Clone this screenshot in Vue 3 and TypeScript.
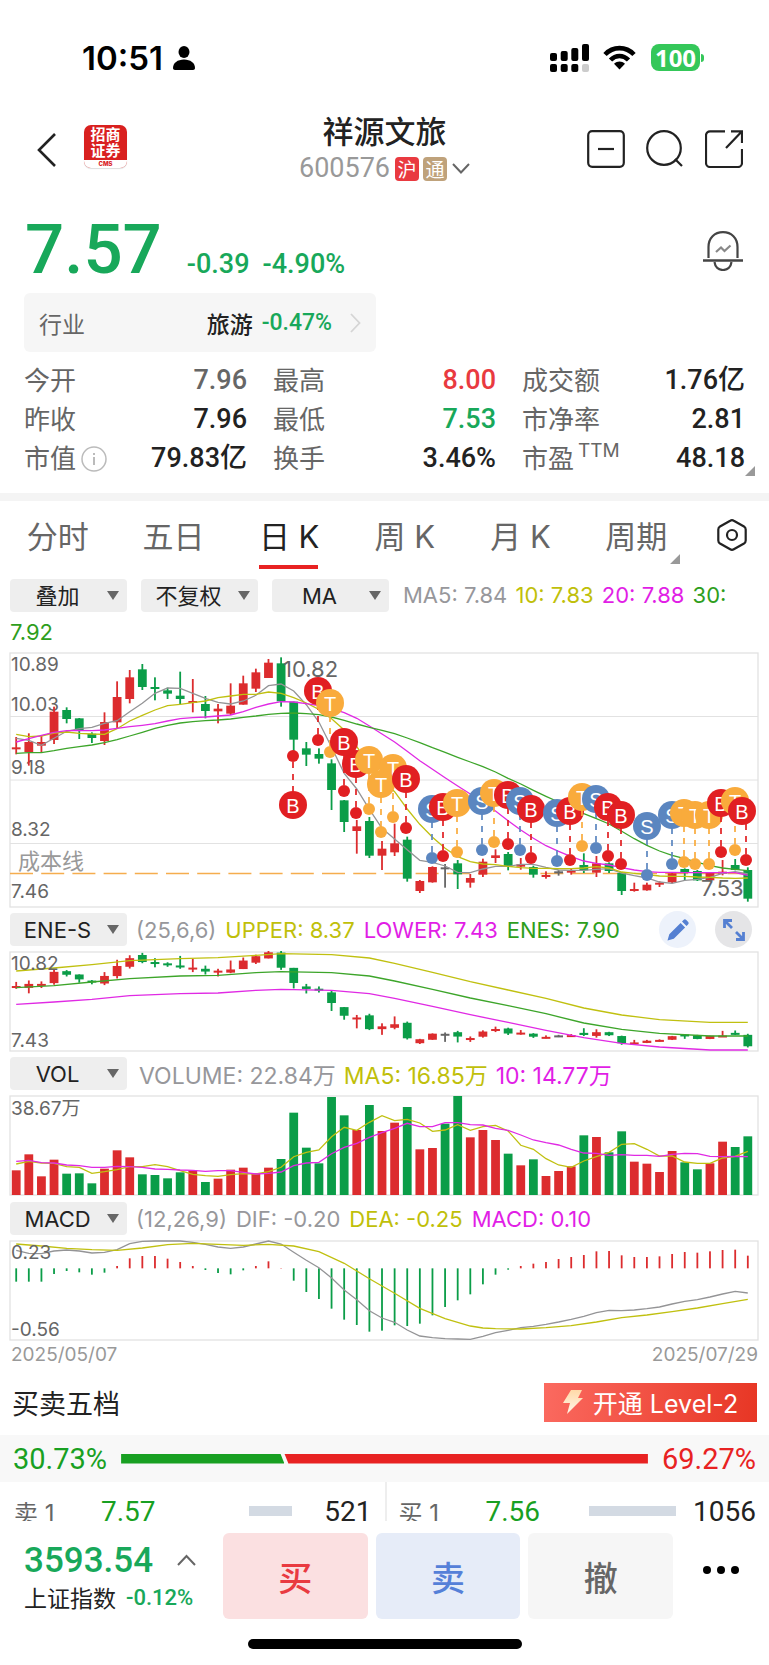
<script setup lang="ts">
import { ref } from 'vue'

type Candle = [kind: 'r' | 'g' | 'k', bodyTop: number, bodyBottom: number, high: number, low: number]
type Marker = [kind: 'B' | 'S' | 'T', x: number, y: number, dotX: number, dotY: number]

const FIRST_X = 16.2
const STEP = 12.614
const palette = { r: '#dc2c2e', g: '#0b9d48', k: '#666666' }
const markerColor = { B: '#e11f22', S: '#5b86c0', T: '#f9ab3c' }
const px = (i: number) => FIRST_X + i * STEP

// Vertical values are stored in thirds of a unit.
const candles: Candle[] = [
  ['r', 322, 327, 291, 343], ['r', 306, 336, 280, 377], ['r', 306, 317, 287, 337], ['r', 215, 300, 200, 312],
  ['g', 210, 237, 202, 250], ['g', 235, 272, 234, 297], ['g', 281, 294, 277, 309], ['r', 246, 303, 217, 315],
  ['r', 171, 247, 124, 265], ['r', 112, 177, 90, 190], ['g', 88, 141, 72, 150], ['g', 141, 147, 112, 181],
  ['g', 151, 161, 143, 177], ['g', 167, 177, 95, 192], ['r', 183, 189, 117, 217], ['g', 192, 213, 168, 235],
  ['r', 206, 214, 192, 250], ['r', 197, 221, 130, 225], ['r', 130, 194, 107, 194], ['r', 97, 146, 86, 156],
  ['r', 68, 114, 57, 114], ['g', 70, 184, 52, 200], ['g', 185, 299, 185, 340], ['g', 325, 344, 306, 378],
  ['g', 342, 356, 325, 371], ['g', 370, 450, 358, 510], ['g', 481, 546, 480, 576], ['r', 559, 573, 540, 641],
  ['g', 543, 647, 531, 654], ['r', 626, 647, 603, 690], ['r', 610, 637, 551, 648], ['g', 599, 716, 590, 725],
  ['r', 723, 753, 720, 759], ['r', 681, 727, 679, 728], ['k', 682, 687, 672, 743], ['g', 670, 703, 660, 747],
  ['r', 714, 728, 702, 743], ['r', 665, 704, 656, 711], ['r', 646, 654, 628, 669], ['g', 642, 680, 636, 691],
  ['r', 673, 680, 654, 689], ['g', 681, 704, 677, 713], ['r', 705, 710, 694, 716], ['k', 694, 699, 690, 707],
  ['r', 692, 697, 684, 704], ['g', 675, 691, 640, 699], ['r', 670, 698, 648, 711], ['g', 670, 693, 667, 699],
  ['g', 699, 753, 696, 765], ['r', 747, 753, 728, 755], ['r', 734, 751, 728, 752], ['r', 728, 734, 724, 741],
  ['r', 700, 727, 698, 729], ['g', 687, 697, 685, 720], ['g', 693, 721, 690, 723], ['r', 697, 721, 697, 722],
  ['r', 695, 700, 660, 706], ['g', 675, 690, 657, 691], ['g', 690, 776, 682, 785],
]

const toBars = (map: (v: number) => number) =>
  candles.map(([kind, t, b, h, l], i) => ({
    x: px(i), color: palette[kind], top: map(t), height: Math.max(map(b) - map(t), 2), high: map(h), low: map(l),
  }))
const priceBars = toBars((v) => 640 + v / 3)
const eneBars = toBars((v) => 910 + (127 + (v - 68) * 0.398) / 3)

const line = (base: number, values: number[]) =>
  values.map((v, i) => `${px(i).toFixed(1)},${(base + v / 3).toFixed(1)}`).join(' ')
const sparse = (base: number, points: [number, number][]) =>
  points.map(([i, v]) => `${px(i).toFixed(1)},${(base + v / 3).toFixed(1)}`).join(' ')

const priceLines = [
  { color: '#949496', points: line(640, [295, 301, 316, 295, 274, 266, 262, 250, 242, 215, 190, 160, 144, 145, 160, 175, 187, 192, 183, 166, 137, 132, 153, 194, 246, 322, 400, 447, 508, 565, 597, 629, 661, 667, 678, 697, 698, 687, 679, 679, 673, 673, 682, 690, 691, 691, 688, 686, 699, 707, 714, 726, 730, 721, 718, 712, 700, 695, 702]) },
  { color: '#c0c010', points: line(640, [283, 290, 288, 279, 276, 280, 282, 283, 266, 243, 226, 210, 197, 193, 188, 183, 173, 168, 163, 163, 156, 160, 173, 189, 208, 236, 270, 320, 375, 418, 455, 507, 553, 592, 625, 650, 665, 672, 674, 679, 683, 685, 685, 686, 686, 684, 680, 684, 696, 700, 704, 708, 709, 709, 711, 712, 714, 715, 714]) },
  { color: '#e02ae4', points: line(640, [306, 296, 286, 277, 272, 271, 272, 270, 265, 260, 256, 251, 243, 236, 233, 231, 228, 225, 215, 202, 192, 185, 186, 191, 197, 206, 218, 235, 258, 282, 306, 334, 362, 388, 413, 438, 462, 488, 513, 542, 570, 595, 617, 634, 650, 663, 670, 675, 683, 690, 695, 697, 697, 698, 698, 698, 698, 698, 706]) },
  { color: '#3da52a', points: line(640, [340, 338, 338, 332, 325, 320, 315, 308, 299, 288, 277, 265, 256, 249, 245, 242, 240, 237, 232, 228, 223, 220, 219, 221, 224, 231, 241, 252, 262, 271, 281, 294, 308, 323, 337, 352, 366, 380, 396, 415, 432, 451, 469, 486, 503, 521, 536, 552, 574, 596, 616, 633, 646, 656, 667, 677, 684, 688, 692]) },
]

const eneLines = [
  { color: '#c0c010', points: sparse(910, [[0, 183], [3, 174], [6, 164], [9, 152], [13, 146], [16, 143], [19, 136], [21, 131], [25, 134], [28, 144], [30, 160], [33, 187], [36, 215], [39, 240], [42, 265], [45, 294], [48, 315], [51, 329], [55, 337], [58, 337]]) },
  { color: '#3da52a', points: sparse(910, [[0, 233], [3, 227], [6, 216], [9, 206], [13, 198], [16, 196], [19, 188], [21, 185], [25, 188], [28, 198], [30, 213], [33, 238], [36, 264], [39, 287], [42, 311], [45, 339], [48, 358], [51, 370], [55, 378], [58, 378]]) },
  { color: '#e02ae4', points: sparse(910, [[0, 283], [3, 276], [6, 268], [9, 257], [13, 251], [16, 249], [19, 241], [21, 238], [25, 241], [28, 251], [30, 265], [33, 289], [36, 314], [39, 337], [42, 361], [45, 383], [48, 400], [51, 411], [55, 420], [58, 420]]) },
]

const volumeTops = [781, 733, 799, 749, 791, 790, 820, 776, 721, 742, 793, 795, 805, 787, 781, 816, 806, 779, 773, 790, 773, 747, 608, 713, 760, 561, 616, 660, 585, 663, 638, 591, 718, 714, 641, 558, 682, 660, 690, 731, 766, 748, 798, 783, 769, 676, 681, 727, 664, 755, 761, 786, 723, 757, 778, 760, 695, 711, 679]
const greenVolume = new Set([4, 5, 6, 10, 11, 12, 13, 15, 21, 22, 23, 24, 25, 26, 28, 31, 34, 35, 39, 41, 45, 47, 48, 53, 54, 57, 58])
const volumeBars = volumeTops.map((v, i) => ({
  x: px(i), y: 910 + v / 3, color: greenVolume.has(i) ? palette.g : palette.r,
}))
const volumeLines = [
  { color: '#c0c010', points: line(910, [762, 754, 759, 760, 770, 772, 790, 785, 779, 770, 770, 764, 770, 782, 793, 797, 799, 794, 791, 792, 785, 772, 740, 727, 720, 680, 652, 661, 637, 617, 632, 628, 639, 664, 660, 644, 661, 650, 646, 663, 706, 718, 746, 765, 772, 753, 740, 727, 703, 701, 718, 738, 738, 756, 760, 760, 744, 739, 724]) },
  { color: '#e02ae4', points: line(910, [754, 751, 758, 759, 765, 767, 772, 772, 769, 770, 772, 777, 778, 780, 781, 784, 782, 782, 787, 792, 790, 786, 767, 759, 757, 731, 712, 700, 682, 668, 655, 640, 650, 650, 638, 638, 644, 645, 655, 661, 675, 690, 698, 705, 718, 729, 730, 736, 734, 736, 736, 739, 733, 730, 731, 739, 740, 739, 740]) },
]

const macdEnds = [245, 245, 245, 222, 213, 217, 224, 218, 198, 175, 168, 168, 176, 186, 198, 210, 219, 223, 211, 198, 184, 204, 242, 276, 297, 326, 359, 375, 395, 392, 376, 378, 371, 346, 321, 301, 283, 253, 224, 209, 198, 191, 186, 177, 171, 165, 154, 153, 166, 171, 171, 169, 162, 156, 158, 154, 150, 149, 167]
const macdBars = macdEnds.map((v, i) => ({
  x: px(i), y: 1200 + Math.min(v, 205) / 3, h: Math.abs(v - 205) / 3, color: v > 205 ? palette.g : palette.r,
}))
const macdLines = [
  { color: '#949496', points: line(1200, [151, 160, 161, 153, 150, 153, 159, 157, 149, 131, 124, 123, 123, 123, 127, 133, 141, 145, 141, 132, 123, 132, 157, 181, 203, 234, 270, 299, 332, 354, 367, 390, 408, 413, 416, 417, 418, 409, 398, 391, 383, 379, 373, 366, 358, 349, 338, 331, 332, 330, 326, 321, 312, 304, 299, 291, 282, 274, 279]) },
  { color: '#c0c010', points: sparse(1200, [[0, 132], [2, 138], [4, 145], [6, 149], [8, 151], [10, 144], [12, 134], [14, 130], [16, 133], [18, 136], [20, 133], [22, 138], [24, 155], [26, 190], [28, 236], [30, 280], [32, 325], [34, 356], [36, 378], [37, 384], [38, 386], [40, 387], [42, 383], [44, 377], [46, 366], [48, 353], [50, 345], [52, 335], [54, 324], [56, 311], [58, 298]]) },
]

const markers: Marker[] = [
  ['B', 293, 805, 293, 756], ['B', 318, 691, 318, 740], ['T', 330, 703, 330, 752],
  ['B', 356, 764, 356, 813], ['B', 344, 742, 344, 791], ['T', 369, 760, 369, 809], ['T', 393, 768, 393, 817],
  ['T', 381, 784, 381, 832], ['B', 406, 779, 406, 828], ['S', 432, 809, 432, 858], ['B', 443, 807, 443, 856],
  ['T', 457, 803, 457, 852], ['S', 482, 801, 482, 850], ['T', 494, 793, 494, 842], ['B', 508, 795, 508, 844],
  ['S', 520, 801, 520, 850], ['B', 531, 809, 531, 858], ['S', 557, 813, 557, 861], ['B', 570, 811, 570, 860],
  ['T', 582, 797, 582, 846], ['S', 596, 799, 596, 848], ['B', 608, 807, 608, 856], ['B', 621, 815, 621, 864],
  ['S', 647, 826, 647, 875], ['S', 672, 815, 672, 864], ['T', 684, 813, 684, 862], ['T', 695, 815, 695, 864],
  ['T', 709, 815, 709, 864], ['B', 721, 803, 721, 852], ['T', 735, 801, 735, 850], ['B', 742, 811, 746, 860],
]

const stats = [
  ['今开', '7.96', 'muted'], ['最高', '8.00', 'up'], ['成交额', '1.76亿', ''],
  ['昨收', '7.96', ''], ['最低', '7.53', 'down'], ['市净率', '2.81', ''],
  ['市值', '79.83亿', ''], ['换手', '3.46%', ''], ['市盈', '48.18', ''],
]
const tabs = ['分时', '五日', '日 K', '周 K', '月 K', '周期']
const activeTab = ref('日 K')
</script>

<template>
  <main class="page">
    <div class="status">
      <span class="clock">10:51</span>
      <svg class="person" width="22" height="24" viewBox="0 0 22 24"><ellipse cx="11" cy="6" rx="5.5" ry="6" /><path d="M0 22c0-5 4.500-8.500 11-8.500S22 17 22 22c0 1.300-.8 2-2 2H2c-1.200 0-2-.7-2-2z" /></svg>
      <svg class="signal" width="39" height="28" viewBox="0 0 39 28">
        <rect x="0" y="9" width="7" height="8" rx="2" /><rect x="10.700" y="7" width="7" height="10" rx="2" /><rect x="21.300" y="4" width="7" height="13" rx="2" /><rect x="32" y="0" width="7" height="17" rx="2" />
        <rect x="0" y="20" width="7" height="8" rx="2" /><rect x="10.700" y="20" width="7" height="8" rx="2" /><rect x="21.300" y="20" width="7" height="8" rx="2" /><rect x="32" y="20" width="7" height="8" rx="2" fill="#ccc" />
      </svg>
      <svg class="wifi" width="33" height="25" viewBox="0 0 33 25"><path d="M2 9.500C10 1 23 1 31 9.500M7.500 15c5.300-5.400 12.700-5.400 18 0" fill="none" stroke="#000" stroke-width="4.600" /><path d="M11 18.800c3.400-3 7.600-3 11 0L16.500 24.500z" /></svg>
      <span class="battery">100</span><i class="nub"></i>
    </div>

    <header class="header">
      <div class="left">
        <button class="plain" aria-label="返回"><svg width="20" height="36" viewBox="0 0 20 36"><path d="M18 2L2 18l16 16" fill="none" stroke="#222" stroke-width="2.600" /></svg></button>
        <div class="logo"><b>招商<br />证券</b><em>CMS</em></div>
      </div>
      <div class="title">
        <h1>祥源文旅</h1>
        <button class="plain code"><span>600576</span><i class="tag hu">沪</i><i class="tag tong">通</i><svg width="18" height="11" viewBox="0 0 18 11"><path d="M1 1l8 8.500L17 1" fill="none" stroke="#666" stroke-width="2" /></svg></button>
      </div>
      <div class="right">
        <button class="plain" aria-label="移除自选"><svg width="38" height="38" viewBox="0 0 38 38"><rect x="1.200" y="1.200" width="35.600" height="35.600" rx="4" /><path d="M11 19h16" /></svg></button>
        <button class="plain" aria-label="搜索"><svg width="38" height="38" viewBox="0 0 38 38"><circle cx="18" cy="18" r="16.800" /><path d="M29 29l7 7" /></svg></button>
        <button class="plain" aria-label="分享"><svg width="38" height="38" viewBox="0 0 38 38"><path d="M20 1.300H5a4 4 0 0 0-4 4V33a4 4 0 0 0 4 4h28a4 4 0 0 0 4-4V19M26 1.300h11V13M37 1.300L21 18" /></svg></button>
      </div>
    </header>

    <section class="quote">
      <strong>7.57</strong><span>-0.39</span><span>-4.90%</span>
      <button class="plain bell" aria-label="预警"><svg width="40" height="40" viewBox="0 0 40 40" fill="none" stroke="#444" stroke-width="2.200"><path d="M5.500 27V16C5.500 7 11.500 1.200 20 1.200S34.500 7 34.500 16v11" /><path d="M0 29.500h40" stroke-width="2.600" /><path d="M11.500 31c.6 5 4 8 8.500 8s7.900-3 8.500-8" /><path d="M13 21l5-4.500 3.500 3.500 6-5.500" stroke="#888" /></svg></button>
    </section>

    <a href="#industry" class="industry">
      <span>行业</span><b>旅游</b><em>-0.47%</em>
      <svg width="11" height="20" viewBox="0 0 11 20"><path d="M1 1l8.500 9L1 19" fill="none" stroke="#d5d5d5" stroke-width="1.800" /></svg>
    </a>

    <dl class="stats">
      <div v-for="([label, value, tone], i) in stats" :key="label">
        <dt>{{ label }}<sup v-if="i === 8">TTM</sup><svg v-if="i === 6" class="info" width="26" height="26" viewBox="0 0 26 26"><circle cx="13" cy="13" r="12" fill="none" stroke="#bbb" stroke-width="1.500" /><path d="M13 11v8M13 7v2" stroke="#bbb" stroke-width="2" /></svg></dt>
        <dd :class="tone">{{ value }}<i v-if="i === 8" class="corner"></i></dd>
      </div>
    </dl>

    <nav class="tabs">
      <button v-for="t in tabs" :key="t" class="plain" :class="{ active: t === activeTab }" @click="activeTab = t">{{ t }}<i v-if="t === '周期'" class="corner"></i></button>
      <button class="plain gear" aria-label="设置"><svg width="30" height="32" viewBox="0 0 30 32" fill="none" stroke="#222" stroke-width="2.200"><path d="M13.200 1.700a3.500 3.500 0 0 1 3.600 0L27 7.500a3.500 3.500 0 0 1 1.700 3v11a3.500 3.500 0 0 1-1.700 3L16.800 30.300a3.500 3.500 0 0 1-3.600 0L3 24.500a3.500 3.500 0 0 1-1.700-3v-11a3.500 3.500 0 0 1 1.700-3z" /><circle cx="15" cy="16" r="5" /></svg></button>
    </nav>

    <div class="tools">
      <span class="drop"><select aria-label="叠加"><option>叠加</option></select></span>
      <span class="drop"><select aria-label="复权"><option>不复权</option></select></span>
      <span class="drop"><select aria-label="主图指标"><option>MA</option></select></span>
      <span class="leg c5">MA5: 7.84</span> <span class="leg c10">10: 7.83</span> <span class="leg c20">20: 7.88</span> <span class="c30">30:</span> <span class="c30">7.92</span>
    </div>

    <svg class="chart" viewBox="9 652 750 256">
      <path d="M10 716.500H758M10 780H758M10 843.500H758" stroke="#e2e2e2" />
      <rect x="10" y="653" width="748" height="254" fill="none" stroke="#e2e2e2" stroke-width="1.300" />
      <g class="axis"><text x="11" y="671">10.89</text><text x="11" y="711">10.03</text><text x="11" y="774">9.18</text><text x="11" y="836">8.32</text><text x="11" y="898">7.46</text></g>
      <text x="18" y="869" class="cost">成本线</text>
      <path d="M10 873.500H758" stroke="#f5ad4e" stroke-width="1.500" stroke-dasharray="23 8.200" />
      <g v-for="(c, i) in priceBars" :key="i" :fill="c.color"><rect :x="c.x - 4.4" :y="c.top" width="8.800" :height="c.height" /><rect :x="c.x - 0.9" :y="c.high" width="1.800" :height="c.low - c.high" /></g>
      <polyline v-for="l in priceLines" :key="l.color" :points="l.points" :stroke="l.color" class="ma" />
      <g class="peak"><text x="283" y="677">10.82</text><text x="701" y="896">7.53</text></g>
      <g v-for="([k, x, y, dx, dy], i) in markers" :key="i">
        <path :d="`M${dx} ${y}V${dy}`" :stroke="markerColor[k]" stroke-width="1.700" stroke-dasharray="6 6" stroke-dashoffset="-1" />
        <circle :cx="dx" :cy="dy" r="6" :fill="markerColor[k]" />
        <circle :cx="x" :cy="y" r="14" :fill="markerColor[k]" />
        <text :x="x" :y="y + 8" class="letter">{{ k }}</text>
      </g>
    </svg>

    <div class="row">
      <span class="drop"><select aria-label="副图指标一"><option>ENE-S</option></select></span>
      <span class="c5">(25,6,6)</span><span class="c10">UPPER: 8.37</span><span class="c20">LOWER: 7.43</span><span class="c30">ENES: 7.90</span>
      <button class="plain round pen" aria-label="编辑"><svg width="22" height="22" viewBox="0 0 22 22" fill="#5580d2"><path d="M.5 21.500l1.800-6.300L13.600 3.900l4.500 4.500L6.800 19.700zM15 2.500l1.500-1.500a2 2 0 0 1 2.800 0l1.700 1.700a2 2 0 0 1 0 2.800L19.500 7z" /></svg></button>
      <button class="plain round grow" aria-label="全屏"><svg width="22" height="22" viewBox="0 0 22 22" fill="none" stroke="#5580d2" stroke-width="2.800"><path d="M1.500 9V1.500H9M2 2l7 7M20.500 13v7.500H13M20 20l-7-7" /></svg></button>
    </div>
    <svg class="chart" viewBox="9 951 750 101">
      <rect x="10" y="952" width="748" height="99" fill="none" stroke="#e2e2e2" stroke-width="1.300" />
      <g v-for="(c, i) in eneBars" :key="i" :fill="c.color"><rect :x="c.x - 4.4" :y="c.top" width="8.800" :height="c.height" /><rect :x="c.x - 0.9" :y="c.high" width="1.800" :height="c.low - c.high" /></g>
      <polyline v-for="l in eneLines" :key="l.color" :points="l.points" :stroke="l.color" class="ma" />
      <g class="axis"><text x="11" y="970">10.82</text><text x="11" y="1047">7.43</text></g>
    </svg>

    <div class="row volume">
      <span class="drop"><select aria-label="副图指标二"><option>VOL</option></select></span>
      <span class="c5 vol">VOLUME: 22.84万</span><span class="c10">MA5: 16.85万</span><span class="c20">10: 14.77万</span>
    </div>
    <svg class="chart" viewBox="9 1095 750 102">
      <rect x="10" y="1096" width="748" height="99" fill="none" stroke="#e2e2e2" stroke-width="1.300" />
      <rect v-for="(b, i) in volumeBars" :key="i" :x="b.x - 4.4" :y="b.y" width="8.800" :height="1195 - b.y" :fill="b.color" />
      <polyline v-for="l in volumeLines" :key="l.color" :points="l.points" :stroke="l.color" class="ma" />
      <g class="axis"><text x="11" y="1115">38.67万</text></g>
    </svg>

    <div class="row">
      <span class="drop"><select aria-label="副图指标三"><option>MACD</option></select></span>
      <span class="c5">(12,26,9)</span><span class="c5">DIF: -0.20</span><span class="c10">DEA: -0.25</span><span class="c20">MACD: 0.10</span>
    </div>
    <svg class="chart" viewBox="9 1240 750 101">
      <rect x="10" y="1241" width="748" height="99" fill="none" stroke="#e2e2e2" stroke-width="1.300" />
      <rect v-for="(b, i) in macdBars" :key="i" :x="b.x - 0.9" :y="b.y" width="1.800" :height="b.h" :fill="b.color" />
      <polyline v-for="l in macdLines" :key="l.color" :points="l.points" :stroke="l.color" class="ma" />
      <g class="axis"><text x="11" y="1259">0.23</text><text x="11" y="1336">-0.56</text></g>
    </svg>
    <div class="dates"><time>2025/05/07</time><time>2025/07/29</time></div>

    <section class="depth">
      <h2>买卖五档</h2>
      <button class="level"><svg width="20" height="24" viewBox="0 0 20 24"><defs><linearGradient id="bolt" x1="0" y1="0" x2="0" y2="1"><stop offset="0" stop-color="#ffd9a8" /><stop offset="1" stop-color="#fff7ea" /></linearGradient></defs><path d="M8 0h11l-4 8h5L4 24l3-11H0z" fill="url(#bolt)" /></svg>开通 Level-2</button>
    </section>
    <div class="ratio"><span class="sell">30.73%</span><div class="bar"><i class="low"></i><i class="high"></i></div><span class="buy">69.27%</span></div>
    <div class="book">
      <div class="side"><span>卖 1</span><b>7.57</b><i class="short"></i><em>521</em></div>
      <div class="side"><span>买 1</span><b>7.56</b><i class="long"></i><em>1056</em></div>
    </div>

    <footer class="footer">
      <button class="plain index"><span class="point"><b>3593.54</b><svg width="19" height="12" viewBox="0 0 19 12"><path d="M1 11l8.500-9 8.500 9" fill="none" stroke="#666" stroke-width="2" /></svg></span><span class="name">上证指数 <em>-0.12%</em></span></button>
      <button class="trade b">买</button><button class="trade s">卖</button><button class="trade c">撤</button>
      <button class="plain more" aria-label="更多"><svg width="38" height="10" viewBox="0 0 38 10"><circle cx="5" cy="5" r="4" /><circle cx="19" cy="5" r="4" /><circle cx="33" cy="5" r="4" /></svg></button>
    </footer>
    <div class="home"></div>
  </main>
</template>

<style>
body { background: #fff; }
</style>

<style scoped>
* { box-sizing: border-box; }
.page { font-family: Inter, "Noto Sans CJK SC", sans-serif; color: #222; background: #fff; overflow: hidden; }
.plain { appearance: none; border: 0; background: none; padding: 0; margin: 0; font: inherit; color: inherit; display: block; cursor: pointer; }
svg { display: block; flex: none; }
i, em { font-style: normal; }
.status { height: 113px; padding: 2px 65px 0 82px; display: flex; align-items: center; }
.clock { font-size: 33px; font-weight: 600; color: #000; }
.person { margin-left: 10px; }
.signal { margin-left: auto; }
.wifi { margin-left: 14px; }
.battery { margin-left: 15px; width: 49px; height: 27px; border-radius: 8px; background: #34c759; color: #fff; font: 700 24px/27px "Noto Sans", sans-serif; text-align: center; }
.nub { width: 3px; height: 8px; margin-left: 1px; border-radius: 0 3px 3px 0; background: #34c759; }
.header { display: grid; grid-template-columns: 1fr auto 1fr; align-items: center; height: 74px; padding: 0 26px; }
.left { display: flex; align-items: center; gap: 27px; padding-left: 11px; }
.logo { width: 43px; height: 43px; margin-top: -8px; border-radius: 7px; background: #d9201f; color: #fff; text-align: center; overflow: hidden; display: flex; flex-direction: column; justify-content: space-between; box-shadow: 0 1px 1px #ddd; }
.logo b { font-size: 15px; line-height: 16px; padding-top: 2px; font-weight: 700; }
.logo em { background: #fff; color: #d9201f; font-size: 6px; line-height: 8px; font-weight: 800; }
.title { display: flex; flex-direction: column; align-items: center; }
h1 { margin: 0; font-size: 31px; line-height: 37px; font-weight: 500; }
.code { display: flex; align-items: center; height: 37px; font: 27px/37px Roboto, sans-serif; color: #999; }
.tag { width: 24px; height: 24px; margin-left: 4px; border-radius: 4px; color: #fff; font: 19px/24px "Noto Sans CJK SC", sans-serif; text-align: center; }
.code .hu { margin-left: 5px; }
.hu { background: #e93a40; }
.tong { background: #bfa27b; }
.code svg { margin-left: 5px; }
.right { display: flex; justify-content: flex-end; gap: 21px; margin-top: -2px; }
.right svg { fill: none; stroke: #222; stroke-width: 2.2; }
.quote { display: flex; align-items: baseline; height: 106px; padding: 25px 26px 0 25px; font-family: Roboto, sans-serif; color: #18a85a; font-size: 28px; font-weight: 500; }
.quote strong { font-size: 69px; line-height: 76px; font-weight: 500; margin-right: 25px; }
.quote span { margin-right: 13px; font-size: 27px; }
.bell { margin-left: auto; align-self: flex-start; padding-top: 19px; }
.industry { display: flex; align-items: center; width: 352px; height: 59px; margin-left: 24px; padding: 0 15px; border-radius: 6px; background: #f6f6f6; color: #666; font-size: 23px; text-decoration: none; }
.industry b { margin-left: auto; color: #222; font-weight: 500; }
.industry em { margin: 0 18px 0 9px; color: #18a85a; font: 500 23px Roboto, sans-serif; }
.stats { display: grid; grid-template-columns: repeat(3, 1fr); column-gap: 26px; margin: 9px 24px 15px; }
.stats div { display: flex; justify-content: space-between; height: 39px; line-height: 39px; font-size: 26px; color: #666; }
dt { display: flex; align-items: center; white-space: nowrap; }
dt sup { font-size: 19px; line-height: 19px; align-self: flex-start; margin: 2px 0 0 4px; }
.info { margin-left: 5px; }
dd { margin: 0; position: relative; font-family: Roboto, "Noto Sans CJK SC", sans-serif; font-size: 27px; font-weight: 500; color: #222; }
dd.muted { color: #666; }
dd.up { color: #e93a40; }
dd.down { color: #18a85a; }
.corner { position: absolute; width: 10px; height: 10px; right: -10px; bottom: 2px; background: #999; clip-path: polygon(100% 0, 100% 100%, 0 100%); }
.tabs { display: flex; align-items: center; height: 76px; border-top: 8px solid #f4f4f4; font-size: 31px; color: #666; }
.tabs button { position: relative; flex: 1; height: 68px; padding-top: 3px; line-height: 65px; text-align: center; white-space: nowrap; }
.tabs .active { color: #222; }
.tabs .active::after { content: ""; position: absolute; left: 50%; bottom: 0; width: 59px; height: 4px; margin-left: -30px; background: #e82222; }
.tabs .corner { right: 14px; bottom: 5px; }
.tabs .gear { display: flex; flex: none; width: 75px; padding: 0; align-items: center; justify-content: center; }
.tools { min-height: 83px; padding: 8px 10px 0; font-size: 22px; line-height: 37px; }
.tools .drop { margin-right: 14px; vertical-align: top; }
.tools .leg { white-space: nowrap; margin-right: 2px; }
.drop { position: relative; display: inline-block; width: 117px; height: 33px; margin-top: 2px; flex: none; }
.drop::after { content: ""; position: absolute; right: 8px; top: 12px; width: 12px; height: 9px; background: #666; clip-path: polygon(0 0, 100% 0, 50% 100%); pointer-events: none; }
select { appearance: none; display: block; width: 100%; height: 33px; padding: 0 22px 0 0; border: 0; border-radius: 4px; background: #eee; color: #222; font: 22px Inter, "Noto Sans CJK SC", sans-serif; text-align: center; text-align-last: center; }
.c5 { color: #97979b; }
.c10 { color: #c0bf0a; }
.c20 { color: #e11ee6; }
.c30 { color: #2e9e1c; }
.chart { width: calc(100% - 19px); height: auto; margin-left: 9px; }
.axis text { font: 19px Inter, "Noto Sans CJK SC", sans-serif; fill: #666; }
.peak text { font: 22px Inter, sans-serif; fill: #666; }
.cost { font: 22px "Noto Sans CJK SC", sans-serif; fill: #999; }
.letter { font: 20px "Liberation Sans", sans-serif; fill: #fff; text-anchor: middle; }
.ma { fill: none; stroke-width: 1.3; }
.row { display: flex; align-items: center; gap: 9px; height: 43px; padding: 0 17px 0 10px; font-size: 22px; white-space: nowrap; }
.row .drop { margin-top: 0; }
.volume { font-size: 23px; gap: 8px; }
.row .vol { margin-left: 4px; }
.round { width: 37px; height: 37px; border-radius: 50%; display: flex; align-items: center; justify-content: center; }
.pen { margin-left: auto; margin-right: 10px; background: #edf2fb; }
.grow { background: #e5e5e7; }
.dates { display: flex; justify-content: space-between; height: 28px; padding: 0 11px; font-size: 19px; line-height: 28px; color: #999; }
.depth { display: flex; align-items: center; justify-content: space-between; height: 66px; padding: 0 12px; }
h2 { margin: 0; font-size: 27px; font-weight: 400; }
.level { display: flex; align-items: center; justify-content: center; gap: 10px; width: 213px; height: 39px; padding: 0; border: 0; background: linear-gradient(100deg, #fb6a60, #e73624); color: #fff; font: 25px Inter, "Noto Sans CJK SC", sans-serif; white-space: nowrap; }
.ratio { display: flex; align-items: center; justify-content: space-between; gap: 14px; height: 47px; padding: 0 13px; background: #f8f8f8; font: 29px Roboto, sans-serif; }
.sell { color: #18a022; }
.buy { color: #e82222; }
.bar { flex: 1; display: flex; height: 10px; }
.low { width: 31%; background: #18a022; clip-path: polygon(0 0, calc(100% - 4px) 0, 100% 100%, 0 100%); }
.high { flex: 1; background: #e82222; clip-path: polygon(0 0, 100% 0, 100% 100%, 4px 100%); }
.book { display: grid; grid-template-columns: 1fr 1fr; height: 39px; overflow: hidden; }
.side { display: flex; align-items: center; height: 58px; padding: 0 13px 0 14px; font: 28px Roboto, sans-serif; }
.side + .side { padding-left: 12px; border-left: 2px solid #eee; }
.side span { width: 87px; font: 24px Inter, "Noto Sans CJK SC", sans-serif; color: #666; }
.side b { font-weight: 400; color: #18a022; }
.side i { height: 10px; margin-left: auto; background: #d3dae3; }
.side .short { width: 43px; }
.side .long { width: 87px; }
.side em { width: 80px; text-align: right; }
.footer { display: flex; align-items: flex-start; gap: 8px; height: 104px; padding: 12px 29px 0 24px; }
.index { width: 191px; text-align: left; padding-top: 7px; }
.point { display: flex; align-items: center; gap: 24px; height: 40px; font-family: Roboto, sans-serif; }
.point b { font-size: 35px; font-weight: 500; color: #18a85a; }
.name { display: flex; align-items: center; gap: 10px; height: 34px; font-size: 23px; white-space: nowrap; color: #222; }
.name em { font: 500 22px Roboto, sans-serif; color: #18a85a; }
.trade { flex: 1; height: 86px; padding: 0; border: 0; border-radius: 6px; font: 500 34px Inter, "Noto Sans CJK SC", sans-serif; }
.b { background: #fbe0e1; color: #e93a40; }
.s { background: #e6ecf8; color: #5580d8; }
.c { background: #f6f6f6; color: #666; }
.more { margin: 32px 0 0 21px; }
.home { width: 274px; height: 10px; margin: 14px auto 15px; border-radius: 5px; background: #000; }
</style>
